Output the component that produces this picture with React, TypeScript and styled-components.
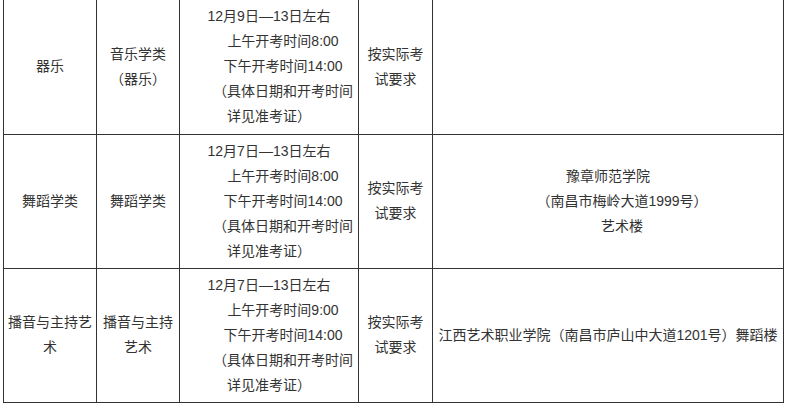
import styled, { createGlobalStyle } from 'styled-components';

const GlobalStyle = createGlobalStyle`
  html, body {
    margin: 0;
    padding: 0;
    background: #fff;
  }
  body {
    font-family: "Liberation Sans", "Noto Sans CJK SC", sans-serif;
    color: #333;
  }
`;

const Page = styled.div`
  padding-left: 3px;
`;

const ScheduleTable = styled.table`
  width: 780px;
  border-collapse: collapse;
  table-layout: fixed;
  font-size: 14px;
  line-height: 25px;
  color: #333;
  text-spacing-trim: space-all;
`;

const Row = styled.tr`
  &:first-child td {
    border-top: none;
  }
`;

const Cell = styled.td`
  height: 134px;
  border: 1px solid #333;
  padding: 0 4px;
  text-align: center;
  vertical-align: middle;
  box-sizing: border-box;
`;

const Line = styled.div<{ $indent?: boolean }>`
  padding-left: ${p => (p.$indent ? '28px' : '0')};
  white-space: nowrap;
`;

type Exam = {
  major: string[];
  category: string[];
  date: string;
  morning: string;
  place?: { text: string; indent?: boolean }[];
};

const exams: Exam[] = [
  {
    major: ['器乐'],
    category: ['音乐学类', '（器乐）'],
    date: '12月9日—13日左右',
    morning: '上午开考时间8:00',
  },
  {
    major: ['舞蹈学类'],
    category: ['舞蹈学类'],
    date: '12月7日—13日左右',
    morning: '上午开考时间8:00',
    place: [
      { text: '豫章师范学院' },
      { text: '（南昌市梅岭大道1999号）', indent: true },
      { text: '艺术楼', indent: true },
    ],
  },
  {
    major: ['播音与主持艺', '术'],
    category: ['播音与主持', '艺术'],
    date: '12月7日—13日左右',
    morning: '上午开考时间9:00',
    place: [{ text: '江西艺术职业学院（南昌市庐山中大道1201号）舞蹈楼' }],
  },
];

const App = () => {
  return (
    <Page>
      <GlobalStyle />
      <ScheduleTable>
        <colgroup>
          <col style={{ width: 93 }} />
          <col style={{ width: 83 }} />
          <col style={{ width: 179 }} />
          <col style={{ width: 74 }} />
          <col style={{ width: 351 }} />
        </colgroup>
        <tbody>
          {exams.map((exam, i) => (
            <Row key={i}>
              <Cell>
                {exam.major.map(t => (
                  <Line key={t}>{t}</Line>
                ))}
              </Cell>
              <Cell>
                {exam.category.map(t => (
                  <Line key={t}>{t}</Line>
                ))}
              </Cell>
              <Cell>
                <Line>{exam.date}</Line>
                <Line $indent>{exam.morning}</Line>
                <Line $indent>下午开考时间14:00</Line>
                <Line $indent>（具体日期和开考时间</Line>
                <Line>详见准考证）</Line>
              </Cell>
              <Cell>
                <Line>按实际考</Line>
                <Line>试要求</Line>
              </Cell>
              <Cell>
                {exam.place?.map(p => (
                  <Line key={p.text} $indent={p.indent}>
                    {p.text}
                  </Line>
                ))}
              </Cell>
            </Row>
          ))}
        </tbody>
      </ScheduleTable>
    </Page>
  );
};

export default App;
